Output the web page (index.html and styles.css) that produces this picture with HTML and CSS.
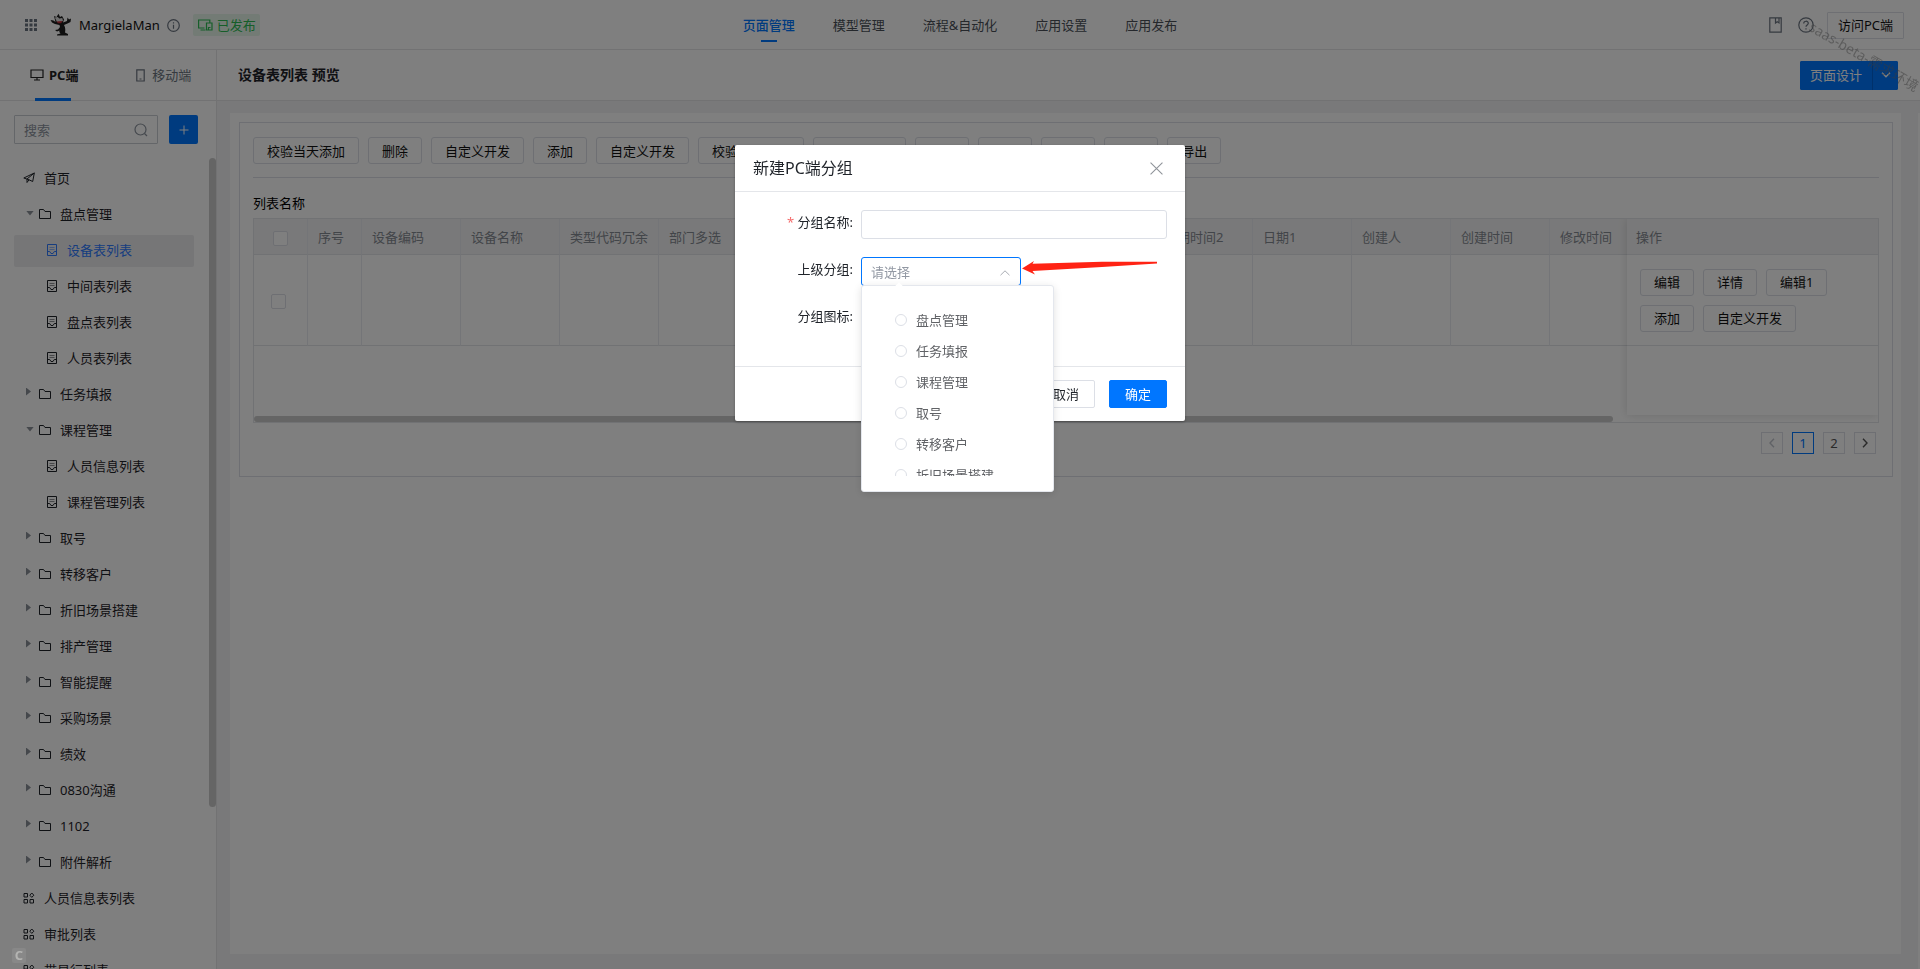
FILE: index.html
```html
<!DOCTYPE html>
<html lang="zh-CN">
<head>
<meta charset="utf-8">
<title>页面管理</title>
<link rel="stylesheet" href="styles.css">
</head>
<body>
<svg class="defs" aria-hidden="true">
  <symbol id="i-folder" viewBox="0 0 12 12"><path d="M.5 10.500v-9h4l1.500 2h5.500v7z"/></symbol>
  <symbol id="i-page" viewBox="0 0 12 12"><path d="M1.500.500h9v11h-9z"/><path opacity=".5" d="M3.500 3.500h5M3.500 5.500h5"/><path d="M1.500 7.500h2.200L5 9.500h2l1.300-2h2.200"/></symbol>
  <symbol id="i-apps" viewBox="0 0 12 12"><path d="M1 1.500h3.500v3.500H1zM1 7.500h3.500v3.500H1zM7 7.500h3.500v3.500H7zM8.800 1l2 2.200-2 2.200-2-2.200z"/></symbol>
  <symbol id="i-plane" viewBox="0 0 12 12"><path d="M.8 6L11.300 1l-1.600 8.500-3.700-1.700zM11.300 1L4 7v3.500l2-2.700"/></symbol>
</svg>

<div class="app">
  <header class="topbar">
    <div class="brand">
      <svg class="grid-icon" viewBox="0 0 12 12"><path d="M0 0h3v3H0zM4.500 0h3v3h-3zM9 0h3v3H9zM0 4.500h3v3H0zM4.500 4.500h3v3h-3zM9 4.500h3v3H9zM0 9h3v3H0zM4.500 9h3v3h-3zM9 9h3v3H9z"/></svg>
      <svg class="avatar" viewBox="0 0 22 24">
        <path class="ink" d="M4 3l2.500 1L8.500.8 10 4l2-1 2 3.500-1 3 4-1.500 .5-3.500 1.500 2 2-1-.5 3.500-3 1.500-3.500 1.500c1.500 3 1.500 5 1 7.500l3 1.500v1.500H7V21.500l3.500-1c-1-1-1.500-2-1-3l-2.500 1-2-1.500 3-.5 2-2.500-.5-2L5 11 2 9.500.5 7l3 .5 2 1.500z"/>
        <path class="face" d="M4.800 4.500l3-.5 1.500 1.500 3-.5.7 2.500L11 9.500 7 9z"/>
        <path class="mouth" d="M6.500 8.500l6-.5-1.500 2.200H8z"/>
      </svg>
      <span class="brand-name">MargielaMan</span>
      <svg class="line-icon info" viewBox="0 0 13 13"><circle cx="6.500" cy="6.500" r="5.800"/><path d="M6.500 5.800v4M6.500 3.300v1.200"/></svg>
      <span class="status"><svg class="line-icon" viewBox="0 0 15 12"><path d="M6.500 9H.6V1h11.200v2.500M2.500 11h5M8.500 11V4h5.500v7zM10.500 11V8.500h2"/></svg>已发布</span>
    </div>
    <nav class="main-nav">
      <a class="active" href="#">页面管理</a>
      <a href="#">模型管理</a>
      <a href="#">流程&amp;自动化</a>
      <a href="#">应用设置</a>
      <a href="#">应用发布</a>
    </nav>
    <div class="tools">
      <svg class="line-icon book" viewBox="0 0 13 16"><path d="M.8.8h11.400v14.400H.8zM6.500 1v5l1.700-1.200L10 6V1"/></svg>
      <svg class="line-icon help" viewBox="0 0 16 16"><circle cx="8" cy="8" r="7.200"/><path d="M5.700 6.500c0-3 4.600-3 4.600-.2C10.300 8 8 8 8 9.800M8 11.200v1.300"/></svg>
      <button class="btn visit" type="button">访问PC端</button>
    </div>
  </header>

  <div class="workspace">
    <aside class="sidebar">
      <div class="tabs">
        <a class="tab active" href="#"><svg class="line-icon" viewBox="0 0 14 12"><path d="M1 1h12v7.500H1zM7 8.500V11M4 11h6"/></svg>PC端</a>
        <a class="tab" href="#"><svg class="line-icon phone" viewBox="0 0 9 13"><path d="M.8.800h7.400v11.200H.8zM3.500 10h2"/></svg>移动端</a>
      </div>
      <div class="search-row">
        <label class="search">
          <input type="text" placeholder="搜索" aria-label="搜索">
          <svg class="line-icon" viewBox="0 0 14 14"><circle cx="6.500" cy="6.500" r="5.500"/><path d="M10.500 10.500l2.500 2.500"/></svg>
        </label>
        <button class="add" type="button" aria-label="新增"><svg viewBox="0 0 10 10"><path d="M5 .5v9M.5 5h9"/></svg></button>
      </div>
      <div class="tree-scroll">
        <ul class="tree">
          <li class="top"><svg><use href="#i-plane"/></svg>首页</li>
          <li class="group open"><i></i><svg><use href="#i-folder"/></svg>盘点管理</li>
          <li class="child selected"><svg><use href="#i-page"/></svg>设备表列表</li>
          <li class="child"><svg><use href="#i-page"/></svg>中间表列表</li>
          <li class="child"><svg><use href="#i-page"/></svg>盘点表列表</li>
          <li class="child"><svg><use href="#i-page"/></svg>人员表列表</li>
          <li class="group"><i></i><svg><use href="#i-folder"/></svg>任务填报</li>
          <li class="group open"><i></i><svg><use href="#i-folder"/></svg>课程管理</li>
          <li class="child"><svg><use href="#i-page"/></svg>人员信息列表</li>
          <li class="child"><svg><use href="#i-page"/></svg>课程管理列表</li>
          <li class="group"><i></i><svg><use href="#i-folder"/></svg>取号</li>
          <li class="group"><i></i><svg><use href="#i-folder"/></svg>转移客户</li>
          <li class="group"><i></i><svg><use href="#i-folder"/></svg>折旧场景搭建</li>
          <li class="group"><i></i><svg><use href="#i-folder"/></svg>排产管理</li>
          <li class="group"><i></i><svg><use href="#i-folder"/></svg>智能提醒</li>
          <li class="group"><i></i><svg><use href="#i-folder"/></svg>采购场景</li>
          <li class="group"><i></i><svg><use href="#i-folder"/></svg>绩效</li>
          <li class="group"><i></i><svg><use href="#i-folder"/></svg>0830沟通</li>
          <li class="group"><i></i><svg><use href="#i-folder"/></svg>1102</li>
          <li class="group"><i></i><svg><use href="#i-folder"/></svg>附件解析</li>
          <li class="top"><svg><use href="#i-apps"/></svg>人员信息表列表</li>
          <li class="top"><svg><use href="#i-apps"/></svg>审批列表</li>
          <li class="top"><svg><use href="#i-apps"/></svg>带显行列表</li>
        </ul>
        <div class="scroll-thumb"></div>
      </div>
    </aside>

    <main class="main">
      <div class="titlebar">
        <h1>设备表列表 预览</h1>
        <div class="split">
          <button type="button">页面设计</button>
          <button type="button" class="caret" aria-label="更多"><svg viewBox="0 0 10 6"><path d="M1 .8l4 4 4-4"/></svg></button>
        </div>
      </div>
      <div class="canvas">
        <section class="sheet">
          <div class="panel">
            <div class="toolbar">
              <button class="btn" type="button">校验当天添加</button>
              <button class="btn" type="button">删除</button>
              <button class="btn" type="button">自定义开发</button>
              <button class="btn" type="button">添加</button>
              <button class="btn" type="button">自定义开发</button>
              <button class="btn" type="button">校验当天添加</button>
              <button class="btn" type="button">自定义开发</button>
              <button class="btn" type="button">添加</button>
              <button class="btn" type="button">编辑</button>
              <button class="btn" type="button">删除</button>
              <button class="btn" type="button">导入</button>
              <button class="btn" type="button">导出</button>
            </div>
            <h2>列表名称</h2>
            <div class="grid">
              <div class="grid-left">
                <table class="data">
                  <colgroup><col class="c-narrow"><col class="c-narrow"><col span="13"></colgroup>
                  <thead><tr>
                    <th class="check"><input type="checkbox" aria-label="全选"></th><th>序号</th><th>设备编码</th><th>设备名称</th><th>类型代码冗余</th><th>部门多选</th><th>部门</th><th>人员</th><th>数量</th><th>时间</th><th>日期时间2</th><th>日期1</th><th>创建人</th><th>创建时间</th><th>修改时间</th>
                  </tr></thead>
                  <tbody><tr>
                    <td class="check"><input type="checkbox" aria-label="选择行"></td><td></td><td></td><td></td><td></td><td></td><td></td><td></td><td></td><td></td><td></td><td></td><td></td><td></td><td></td>
                  </tr></tbody>
                </table>
                <div class="h-thumb"></div>
              </div>
              <div class="grid-right">
                <table class="data">
                  <thead><tr><th>操作</th></tr></thead>
                  <tbody><tr><td><div class="ops">
                    <button class="btn" type="button">编辑</button>
                    <button class="btn" type="button">详情</button>
                    <button class="btn" type="button">编辑1</button>
                    <button class="btn" type="button">添加</button>
                    <button class="btn" type="button">自定义开发</button>
                  </div></td></tr></tbody>
                </table>
              </div>
            </div>
            <div class="pager">
              <button type="button" disabled aria-label="上一页"><svg viewBox="0 0 6 10"><path d="M5 .8l-4 4.200 4 4.200"/></svg></button>
              <button type="button" class="current">1</button>
              <button type="button">2</button>
              <button type="button" aria-label="下一页"><svg viewBox="0 0 6 10"><path d="M1 .8l4 4.200-4 4.200"/></svg></button>
            </div>
          </div>
        </section>
      </div>
    </main>
  </div>
</div>

<div class="overlay">
  <form class="dialog" role="dialog" aria-labelledby="dlg-title">
    <div class="dialog-head">
      <h3 id="dlg-title">新建PC端分组</h3>
      <button class="close" type="button" aria-label="关闭"><svg viewBox="0 0 12 12"><path d="M.5.5l11 11M11.500.5l-11 11"/></svg></button>
    </div>
    <div class="dialog-body">
      <div class="field">
        <label for="g-name"><em>*</em> 分组名称:</label>
        <input id="g-name" type="text">
      </div>
      <div class="field">
        <label for="g-parent">上级分组:</label>
        <div class="select">
          <select id="g-parent"><option>请选择</option></select>
          <svg class="chev" viewBox="0 0 10 6"><path d="M.5 5.200L5 .8l4.500 4.400"/></svg>
          <div class="dropdown">
            <div class="options">
              <label><input type="radio" name="parent">盘点管理</label>
              <label><input type="radio" name="parent">任务填报</label>
              <label><input type="radio" name="parent">课程管理</label>
              <label><input type="radio" name="parent">取号</label>
              <label><input type="radio" name="parent">转移客户</label>
              <label><input type="radio" name="parent">折旧场景搭建</label>
            </div>
          </div>
          <svg class="pointer" viewBox="0 0 136 14"><path d="M0 7.500L12 0l-1.500 2.800L80 .800 135 .800v1.600L80 6 10.500 10l2.500 3.500z"/></svg>
        </div>
      </div>
      <div class="field">
        <span class="field-label">分组图标:</span>
      </div>
    </div>
    <div class="dialog-foot">
      <button class="action" type="button">取消</button>
      <button class="action primary" type="submit">确定</button>
    </div>
  </form>
</div>
<div class="badge-c">C</div>
<div class="watermark">saas-beta-需求环境</div>
</body>
</html>
```
FILE: styles.css
```css
* { box-sizing: border-box; }

body {
  margin: 0;
  font: 13px/18px "Noto Sans", "Noto Sans CJK SC", sans-serif;
  color: #1f2329;
  background: #fff;
  overflow: hidden;
}

button, input, select { font: inherit; color: inherit; margin: 0; }
h1, h2, h3 { margin: 0; font-weight: 400; }
a { color: inherit; text-decoration: none; }
svg { flex: none; display: block; }

.defs { position: absolute; width: 0; height: 0; }
.line-icon { fill: none; stroke: currentColor; stroke-width: 1.2; }

.app { display: flex; flex-direction: column; height: 100vh; }

/* Top bar */
.topbar {
  flex: none;
  display: grid;
  grid-template-columns: 1fr auto 1fr;
  align-items: center;
  height: 50px;
  border-bottom: 1px solid #e4e4e6;
}
.brand { display: flex; align-items: center; padding-left: 25px; }
.grid-icon { width: 12px; height: 12px; fill: #6b7480; }
.avatar { width: 22px; height: 24px; margin: 0 7px 0 13px; }
.avatar .ink { fill: #1c1c1c; }
.avatar .face { fill: #ddd; }
.avatar .mouth { fill: #c0303a; }
.brand-name { font-size: 13px; color: #111; }
.info { width: 13px; height: 13px; margin: 0 13px 0 7px; color: #6b7480; }
.status {
  display: flex;
  align-items: center;
  gap: 4px;
  height: 22px;
  padding: 0 4px 0 5px;
  border-radius: 2px;
  background: #e6f7ea;
  color: #2cbc53;
}
.status svg { width: 15px; height: 12px; }

.main-nav { display: flex; gap: 38px; height: 50px; }
.main-nav a {
  display: flex;
  flex-direction: column;
  align-items: center;
  padding-top: 16px;
  color: #4a5058;
}
.main-nav .active { color: #0076ff; font-weight: 500; }
.main-nav .active::after { content: ""; width: 16px; height: 2px; margin-top: 6px; background: #0076ff; }

.tools { display: flex; align-items: center; justify-content: flex-end; padding-right: 16px; color: #6b7480; }
.book { width: 13px; height: 16px; }
.help { width: 16px; height: 16px; margin: 0 13px 0 16px; }

.btn {
  height: 27px;
  padding: 0 13px;
  border: 1px solid #dcdfe6;
  border-radius: 3px;
  background: transparent;
  color: #111;
  line-height: 18px;
  white-space: nowrap;
}
.visit { padding: 0 10px; border-radius: 1px; }

/* Sidebar */
.workspace { flex: 1; min-height: 0; display: flex; }
.sidebar {
  flex: none;
  display: flex;
  flex-direction: column;
  width: 217px;
  border-right: 1px solid #e4e4e6;
}
.tabs { flex: none; display: flex; height: 51px; border-bottom: 1px solid #e4e4e6; }
.tab { flex: 1; display: flex; align-items: center; justify-content: center; gap: 7px; color: #6b7480; }
.tab:last-child { padding-left: 5px; }
.tab svg { width: 14px; height: 12px; }
.tab .phone { width: 9px; height: 13px; }
.tab.active { position: relative; gap: 5px; padding-left: 2px; color: #222; font-weight: 700; }
.tab.active::after {
  content: "";
  position: absolute;
  left: calc(50% - 18px);
  bottom: -1px;
  width: 36px;
  height: 3px;
  background: #0076ff;
}
.search-row { flex: none; display: flex; gap: 11px; padding: 14px 18px 0 14px; }
.search {
  flex: 1;
  min-width: 0;
  display: flex;
  align-items: center;
  height: 29px;
  padding: 0 9px;
  border: 1px solid #c8ccd2;
  border-radius: 1px;
  color: #8c939d;
}
.search input { flex: 1; min-width: 0; padding: 0; border: 0; outline: 0; background: transparent; }
.search input::placeholder { color: #8c939d; }
.search svg { width: 14px; height: 14px; }
.add {
  flex: none;
  display: grid;
  place-items: center;
  width: 29px;
  height: 29px;
  padding: 0;
  border: 0;
  border-radius: 2px;
  background: #0076ff;
}
.add svg { width: 10px; height: 10px; stroke: #fff; }

.tree-scroll { flex: 1; min-height: 0; display: flex; margin-top: 14px; overflow: hidden; }
.scroll-thumb { flex: none; width: 7px; height: 80%; border-radius: 4px; background: #cacaca; }
.tree { flex: 1; margin: 0; padding: 5px 15px 0 14px; list-style: none; }
.tree li {
  display: flex;
  align-items: center;
  gap: 9px;
  height: 32px;
  margin-bottom: 4px;
  padding: 0 0 2px 9px;
  border-radius: 2px;
}
.tree svg { width: 12px; height: 12px; fill: none; stroke: currentColor; }
.tree .group { padding-left: 12px; }
.tree .child { padding-left: 32px; }
.tree .selected { background: #ececee; color: #2f7bff; }
.tree i {
  width: 5px;
  height: 8px;
  margin: 0 -1px 5px 0;
  background: #8b9099;
  clip-path: polygon(0 0, 100% 50%, 0 100%);
}
.tree .open i { width: 8px; height: 5px; margin: 0 -4px 2px 0; clip-path: polygon(0 0, 100% 0, 50% 100%); }

/* Main area */
.main { flex: 1; min-width: 0; display: flex; flex-direction: column; }
.titlebar {
  flex: none;
  display: flex;
  align-items: center;
  justify-content: space-between;
  height: 51px;
  padding: 0 22px 0 21px;
  border-bottom: 1px solid #e4e4e6;
}
.titlebar h1 { font-size: 14px; font-weight: 700; }
.split { display: flex; gap: 1px; border-radius: 2px; background: #0062d6; overflow: hidden; }
.split button { height: 29px; padding: 0 10px; border: 0; background: #0076ff; color: #fff; }
.split .caret { width: 25px; padding: 0 8px; }
.caret svg { width: 10px; height: 6px; fill: none; stroke: #fff; stroke-width: 1.4; }
.canvas {
  flex: 1;
  min-height: 0;
  padding: 12px 19px 15px 13px;
  background: linear-gradient(#fff, #fff) right 0 top 12px / 2px 100% no-repeat #f3f3f4;
}
.sheet { height: 100%; padding: 9px 8px 9px 9px; background: #fff; }
.panel { padding: 14px 13px 22px; border: 1px solid #dcdfe6; }
.toolbar { display: flex; gap: 9px; padding-bottom: 13px; border-bottom: 1px solid #dcdfe6; }
.panel h2 { margin: 16px 0 6px; font-size: 13px; color: #000; }

.grid { display: flex; height: 205px; border: 1px solid #e2e4e8; }
.grid-left {
  flex: 1;
  min-width: 0;
  display: flex;
  flex-direction: column;
  justify-content: space-between;
  overflow: hidden;
}
.data { width: 100%; border-collapse: separate; border-spacing: 0; table-layout: fixed; }
.grid-left .data { width: 1395px; }
.data col { width: 99px; }
.data .c-narrow { width: 54px; }
.data th, .data td {
  border-right: 1px solid #e9ebf1;
  border-bottom: 1px solid #e2e4e8;
  padding: 0 0 0 10px;
  text-align: left;
  white-space: nowrap;
}
.data th { height: 36px; background: #f3f3f4; color: #858a92; font-weight: 400; }
.data td { height: 91px; }
.data .check { padding: 0; text-align: center; }
.data td.check { padding-right: 4px; }
.check input {
  appearance: none;
  width: 15px;
  height: 15px;
  border: 1px solid #dcdfe6;
  border-radius: 2px;
  background: #fff;
  vertical-align: middle;
}
.h-thumb { width: 99%; height: 6px; border-radius: 3px; background: #cacaca; }
.grid-right {
  width: 251px;
  margin-bottom: 7px;
  box-shadow: 0 0 9px rgba(0, 0, 0, .14);
  clip-path: inset(0 0 -7px -9px);
}
.grid-right .data th, .grid-right .data td { border-right: 0; }
.grid-right .data th { padding-left: 9px; }
.grid-right .data td { padding: 0 13px; white-space: normal; }
.ops { display: flex; flex-wrap: wrap; gap: 9px; }

.pager { display: flex; justify-content: flex-end; gap: 9px; padding: 9px 3px 0 0; }
.pager button {
  display: grid;
  place-items: center;
  width: 22px;
  height: 22px;
  padding: 0;
  border: 1px solid #dcdfe6;
  background: transparent;
  color: #555;
  line-height: 20px;
}
.pager .current { border-color: #0076ff; color: #0076ff; }
.pager button:disabled { color: #c0c4cc; }
.pager svg { width: 6px; height: 10px; fill: none; stroke: currentColor; stroke-width: 1.4; }

.badge-c {
  position: fixed;
  left: 12px;
  bottom: 6px;
  width: 14px;
  height: 15px;
  border-radius: 2px;
  background: rgba(160, 160, 160, .3);
  color: #b4b4b2;
  font-weight: 700;
  line-height: 15px;
  text-align: center;
}

/* Dialog */
.overlay { position: fixed; inset: 0; background: rgba(0, 0, 0, .5); }
.dialog {
  width: 450px;
  margin: 15vh auto 0;
  border-radius: 2px;
  background: #fff;
  box-shadow: 0 1px 3px rgba(0, 0, 0, .3);
}
.dialog-head {
  display: flex;
  align-items: center;
  justify-content: space-between;
  height: 47px;
  padding: 0 22px 0 18px;
  border-bottom: 1px solid #e4e6ea;
}
.dialog-head h3 { font-size: 16px; line-height: 22px; }
.close { padding: 0; border: 0; background: none; }
.close svg { width: 13px; height: 13px; stroke: #8f9399; }
.dialog-body { display: flex; flex-direction: column; gap: 18px; padding: 18px 18px 33px; }
.field { display: flex; min-height: 29px; }
.field > label, .field-label { width: 108px; padding: 3px 8px 0 0; text-align: right; white-space: nowrap; }
.field em { color: #f56c6c; font-style: normal; }
.field > input {
  flex: 1;
  min-width: 0;
  height: 29px;
  padding: 0 9px;
  border: 1px solid #dcdfe6;
  border-radius: 3px;
  outline: 0;
}
.select { position: relative; width: 160px; }
.select select {
  appearance: none;
  width: 100%;
  height: 29px;
  padding: 0 9px;
  border: 1px solid #0076ff;
  border-radius: 3px;
  outline: 0;
  background: #fff;
  color: #9298a3;
}
.chev { position: absolute; right: 11px; top: 13px; width: 10px; height: 6px; fill: none; stroke: #a8abb2; }
.dropdown {
  position: absolute;
  top: 28px;
  left: 0;
  width: 193px;
  padding: 20px 0 15px;
  border: 1px solid #e4e7ed;
  border-radius: 3px;
  background: #fff;
  box-shadow: 0 2px 9px rgba(0, 0, 0, .12);
}
.dropdown::before {
  content: "";
  position: absolute;
  top: -4px;
  left: 33px;
  width: 8px;
  height: 4px;
  background: #fff;
  clip-path: polygon(50% 0, 100% 100%, 0 100%);
}
.options { height: 170px; overflow: hidden; }
.options label { display: flex; align-items: center; gap: 9px; height: 30px; margin-bottom: 1px; padding: 0 0 2px 33px; color: #606266; }
.options input { appearance: none; width: 12px; height: 12px; border: 1px solid #dcdfe6; border-radius: 50%; }
.pointer { position: absolute; left: 161px; top: 4px; width: 136px; height: 14px; fill: #ff2314; }
.dialog-foot {
  display: flex;
  justify-content: flex-end;
  gap: 14px;
  padding: 13px 18px;
  border-top: 1px solid #e4e6ea;
}
.action { width: 58px; height: 28px; padding: 0; border: 1px solid #dcdfe6; border-radius: 2px; background: #fff; }
.action.primary { border-color: #0076ff; background: #0076ff; color: #fff; }

.watermark {
  position: fixed;
  top: 18px;
  right: -19px;
  font-size: 14px;
  line-height: 18px;
  color: rgba(60, 60, 60, .5);
  transform: rotate(30deg);
  transform-origin: 0 0;
  pointer-events: none;
}
```
